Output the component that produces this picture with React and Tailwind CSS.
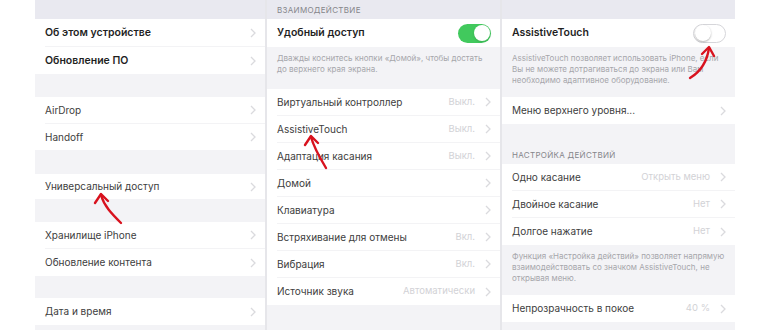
import React from "react";

const font = { fontFamily: "Inter, 'Noto Sans', sans-serif" };

function Chevron() {
  return (
    <svg width="6" height="10" viewBox="0 0 6 10" className="shrink-0">
      <polyline points="1,1 5,5 1,9" fill="none" stroke="#dadade" strokeWidth="1.3" />
    </svg>
  );
}

function Toggle({ on }) {
  return on ? (
    <div className="w-[33px] h-[19px] rounded-full bg-[#41c95d] flex items-center justify-end pr-[1.5px]">
      <div className="w-[16px] h-[16px] rounded-full bg-white shadow" />
    </div>
  ) : (
    <div className="w-[33px] h-[19px] rounded-full bg-white border border-[#d6d6da] flex items-center pl-[1px]">
      <div className="w-[16px] h-[16px] rounded-full bg-white shadow-[0_1px_2px_rgba(0,0,0,0.3)]" />
    </div>
  );
}

function Row({ label, value, bold, h = "h-[27px]", toggle, chevron = true, last }) {
  return (
    <div className={`${h} shrink-0 bg-white pl-[10px] flex items-center`}>
      <div
        className={`flex-1 h-full flex items-center pr-[9px] ${last ? "" : "border-b border-[#f3f3f5]"}`}
      >
        <span
          className={`flex-1 ${bold ? "text-[10.5px] font-semibold text-[#1f1f1f]" : "text-[10px] text-[#404040]"}`}
        >
          {label}
        </span>
        {value && <span className="text-[9.5px] text-[#d2d2d6] mr-[10px]">{value}</span>}
        {toggle !== undefined ? <Toggle on={toggle} /> : chevron && <Chevron />}
      </div>
    </div>
  );
}

function Note({ children, h }) {
  return (
    <div className={`${h} shrink-0 px-[10px] pt-[6px] text-[8px] leading-[11px] text-[#a6a6ab]`}>{children}</div>
  );
}

function Header({ children, h }) {
  return (
    <div className={`${h} shrink-0 px-[10px] pb-[3px] flex items-end text-[8px] tracking-[0.3px] text-[#85858a]`}>
      {children}
    </div>
  );
}

function Arrow({ d, head }) {
  return (
    <g>
      <path d={d} fill="none" stroke="#d8121e" strokeWidth="2.4" strokeLinecap="round" />
      <path d={head} fill="none" stroke="#d8121e" strokeWidth="2.4" strokeLinecap="round" strokeLinejoin="round" />
    </g>
  );
}

export default function App() {
  return (
    <div className="relative w-[770px] h-[330px] bg-white flex pl-[35px] overflow-hidden" style={font}>
      {/* Panel 1 */}
      <div className="w-[230px] h-full bg-[#f3f3f6] flex flex-col">
        <div className="h-[19px] shrink-0 bg-[#e9e9f0]" />
        <Row label="Об этом устройстве" bold h="h-[28px]" />
        <Row label="Обновление ПО" bold last />
        <div className="h-[23px] shrink-0" />
        <Row label="AirDrop" />
        <Row label="Handoff" h="h-[26px]" last />
        <div className="h-[24px] shrink-0" />
        <Row label="Универсальный доступ" h="h-[25px]" last />
        <div className="h-[23px] shrink-0" />
        <Row label="Хранилище iPhone" />
        <Row label="Обновление контента" last />
        <div className="h-[22px] shrink-0" />
        <Row label="Дата и время" last />
      </div>
      <div className="w-[2px] h-full bg-[#e6e6ea]" />

      {/* Panel 2 */}
      <div className="w-[233px] h-full bg-[#f3f3f6] flex flex-col">
        <Header h="h-[19px] bg-[#e9e9f0]">ВЗАИМОДЕЙСТВИЕ</Header>
        <Row label="Удобный доступ" bold h="h-[28px]" toggle={true} last />
        <Note h="h-[42px]">
          Дважды коснитесь кнопки «Домой», чтобы достать до верхнего края экрана.
        </Note>
        <Row label="Виртуальный контроллер" value="Выкл." />
        <Row label="AssistiveTouch" value="Выкл." />
        <Row label="Адаптация касания" value="Выкл." />
        <Row label="Домой" />
        <Row label="Клавиатура" />
        <Row label="Встряхивание для отмены" value="Вкл." />
        <Row label="Вибрация" value="Вкл." />
        <Row label="Источник звука" value="Автоматически" last />
      </div>
      <div className="w-[2px] h-full bg-[#e6e6ea]" />

      {/* Panel 3 */}
      <div className="w-[233px] h-full bg-[#f3f3f6] flex flex-col">
        <div className="h-[19px] shrink-0 bg-[#e9e9f0]" />
        <Row label="AssistiveTouch" bold h="h-[28px]" toggle={false} last />
        <Note h="h-[50px]">
          AssistiveTouch позволяет использовать iPhone, если Вы не можете дотрагиваться до экрана или Вам
          необходимо адаптивное оборудование.
        </Note>
        <Row label="Меню верхнего уровня..." last />
        <Header h="h-[40px]">НАСТРОЙКА ДЕЙСТВИЙ</Header>
        <Row label="Одно касание" value="Открыть меню" />
        <Row label="Двойное касание" value="Нет" />
        <Row label="Долгое нажатие" value="Нет" last />
        <Note h="h-[50px]">
          Функция «Настройка действий» позволяет напрямую взаимодействовать со значком AssistiveTouch, не
          открывая меню.
        </Note>
        <Row label="Непрозрачность в покое" value="40 %" last />
      </div>

      {/* Red annotation arrows */}
      <svg className="absolute inset-0 pointer-events-none" width="770" height="330">
        <Arrow d="M121 223 C 112 214, 104 206, 101 195" head="M95 203 L101 194 L108 201" />
        <Arrow d="M326 168 C 320 158, 314 148, 311 137" head="M305 145 L311 136 L318 143" />
        <Arrow d="M690 78 C 700 72, 707 62, 709 48" head="M702 54 L709 47 L714 56" />
      </svg>
    </div>
  );
}
